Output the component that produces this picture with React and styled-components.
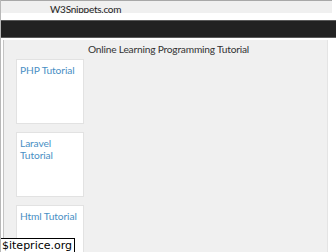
import React from "react";
import styled, { createGlobalStyle } from "styled-components";

const Global = createGlobalStyle`
  html, body { margin: 0; padding: 0; background: #fff; }
  body { font-family: Lato, "Open Sans", "Liberation Sans", sans-serif; }
`;

const Page = styled.div`
  position: relative;
  width: 336px;
  height: 252px;
  overflow: hidden;
  display: flex;
  flex-direction: column;
  border-left: 1px solid #b8b8b8;
  box-sizing: border-box;
`;

const AddressBar = styled.div`
  flex-shrink: 0;
  border-top: 1px solid #a8a8a8;
  height: 12px;
  background: #f0f0f0;
  margin-right: 4px;
  padding-left: 49px;
  font-size: 10px;
  letter-spacing: -0.25px;
  color: #222;
  display: flex;
  align-items: flex-start;
  overflow: visible;
`;

const AddressText = styled.span`
  line-height: 17px;
`;

const Spacer = styled.div`
  flex-shrink: 0;
  height: 7px;
  background: #fff;
`;

const NavBar = styled.div`
  flex-shrink: 0;
  height: 16px;
  background: #222;
  border-top: 1px solid #5a5a5a;
  border-bottom: 1px solid #5a5a5a;
`;

const Body = styled.div`
  flex: 1;
  min-height: 0;
  display: flex;
  padding-top: 2px;
  background: #fff;
`;

const Content = styled.div`
  flex: 1;
  margin-left: 2px;
  margin-right: 8px;
  background: #f0f0f0;
  border-left: 1px solid #c4c4c4;
  border-right: 1px solid #e4e4e4;
  display: flex;
  flex-direction: column;
`;

const Title = styled.h1`
  margin: 0;
  font-weight: 400;
  font-size: 10.2px;
  letter-spacing: -0.2px;
  line-height: 14px;
  color: #333;
  text-align: center;
  padding-top: 2px;
  padding-left: 6px;
`;

const Cards = styled.div`
  display: flex;
  flex-direction: column;
  gap: 8px;
  padding-left: 12px;
  padding-top: 3px;
`;

const Card = styled.a`
  display: block;
  flex-shrink: 0;
  height: 59px;
  width: 60px;
  background: #fff;
  border: 1px solid #e2e2e2;
  padding: 4px 3px 0 3px;
  font-size: 10.2px;
  letter-spacing: -0.1px;
  line-height: 12px;
  color: #4a8fc4;
  text-decoration: none;
`;

const Watermark = styled.div`
  position: absolute;
  left: 0;
  bottom: 0;
  padding: 0 2px 0 1px;
  background: #fff;
  border: 1px solid #000;
  border-left: none;
  border-bottom: none;
  font-family: "DejaVu Sans", sans-serif;
  font-size: 11px;
  line-height: 13px;
  color: #000;
`;

const items = ["PHP Tutorial", "Laravel Tutorial", "Html Tutorial"];

export default function App() {
  return (
    <>
      <Global />
      <Page>
        <AddressBar>
          <AddressText>W3Snippets.com</AddressText>
        </AddressBar>
        <Spacer />
        <NavBar />
        <Body>
          <Content>
            <Title>Online Learning Programming Tutorial</Title>
            <Cards>
              {items.map((t) => (
                <Card key={t} href="#">
                  {t}
                </Card>
              ))}
            </Cards>
          </Content>
        </Body>
        <Watermark>$iteprice.org</Watermark>
      </Page>
    </>
  );
}
